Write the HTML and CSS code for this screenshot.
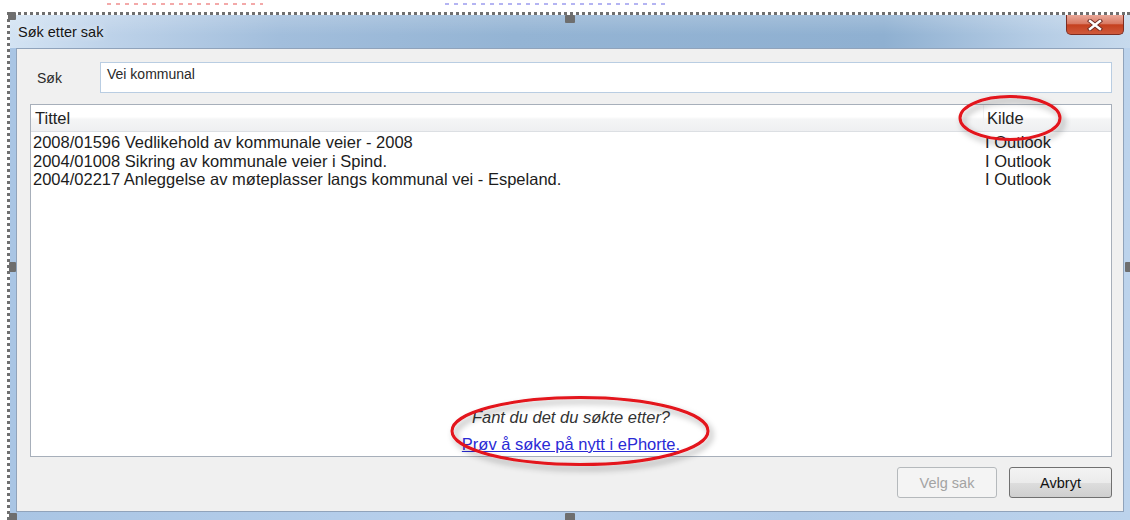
FILE: index.html
```html
<!DOCTYPE html>
<html lang="no">
<head>
<meta charset="utf-8">
<title>Søk etter sak</title>
<link rel="stylesheet" href="styles.css">
</head>
<body>
  <div class="guides">
    <span class="guide guide-red"></span>
    <span class="guide guide-blue"></span>
  </div>

  <div class="frame">
    <div class="window">
      <div class="titlebar">
        <span class="title">Søk etter sak</span>
        <button class="close" type="button" aria-label="Lukk">
          <svg width="16" height="12" viewBox="0 0 16 12">
            <path d="M3 2 L13 10 M13 2 L3 10" stroke="#6b2a22" stroke-width="4.2" stroke-linecap="square" fill="none"/>
            <path d="M3 2 L13 10 M13 2 L3 10" stroke="#ffffff" stroke-width="2.4" stroke-linecap="square" fill="none"/>
          </svg>
        </button>
      </div>

      <div class="client">
        <div class="search-row">
          <label class="search-label" for="q">Søk</label>
          <div class="search-input" id="q">Vei kommunal</div>
        </div>

        <div class="list">
          <div class="list-head">
            <span class="head-cell">Tittel</span>
            <span class="head-cell head-source">Kilde</span>
          </div>
          <div class="list-rows">
            <div class="row"><span>2008/01596 Vedlikehold av kommunale veier - 2008</span><span>I Outlook</span></div>
            <div class="row"><span>2004/01008 Sikring av kommunale veier i Spind.</span><span>I Outlook</span></div>
            <div class="row"><span>2004/02217 Anleggelse av møteplasser langs kommunal vei - Espeland.</span><span>I Outlook</span></div>
          </div>
          <div class="hint">
            <em class="hint-text">Fant du det du søkte etter?</em>
            <a class="hint-link" href="#">Prøv å søke på nytt i ePhorte.</a>
          </div>
        </div>

        <div class="actions">
          <button class="btn btn-pick" type="button" disabled>Velg sak</button>
          <button class="btn btn-cancel" type="button">Avbryt</button>
        </div>
      </div>
    </div>
  </div>

  <!-- designer resize grips -->
  <span class="handle h-tl"></span>
  <span class="handle h-tm"></span>
  <span class="handle h-ml"></span>
  <span class="handle h-mr"></span>
  <span class="handle h-bl"></span>
  <span class="handle h-bm"></span>

  <!-- hand-drawn red callouts -->
  <svg class="marks" width="1130" height="520" viewBox="0 0 1130 520">
    <defs>
      <filter id="soft" x="-20%" y="-40%" width="140%" height="180%">
        <feDropShadow dx="3" dy="4" stdDeviation="3" flood-color="#000" flood-opacity="0.35"/>
      </filter>
    </defs>
    <ellipse cx="1010" cy="118" rx="50" ry="21.5" fill="none" stroke="#e3121b" stroke-width="3" filter="url(#soft)"/>
    <ellipse cx="580" cy="431" rx="128" ry="33.5" fill="none" stroke="#e3121b" stroke-width="3" filter="url(#soft)"/>
  </svg>
</body>
</html>
```

FILE: styles.css
```css
* {
  box-sizing: border-box;
}

html,
body {
  margin: 0;
}

body {
  width: 1130px;
  height: 520px;
  overflow: hidden;
  background: #ffffff;
  font-family: "Liberation Sans", Arial, sans-serif;
  color: #1b1b1b;
}

/* dashed layout guides above the form */
.guides {
  display: flex;
  height: 12px;
  padding: 3px 0 0 107px;
}

.guide {
  display: block;
  height: 2px;
}

.guide-red {
  width: 156px;
  background: repeating-linear-gradient(90deg, #f3a9a9 0 4px, transparent 4px 9px);
}

.guide-blue {
  width: 220px;
  margin-left: 182px;
  background: repeating-linear-gradient(90deg, #b4b4f2 0 4px, transparent 4px 9px);
}

/* selection frame of the form in the designer */
.frame {
  margin-left: 7px;
  border-top: 3px dotted #6f6f6f;
  border-left: 3px dotted #6f6f6f;
}

.window {
  width: 1120px;
  height: 505px;
  display: flex;
  flex-direction: column;
  background: linear-gradient(90deg, #a9c5e4, #b8d0ec 40%, #b2cbe8 70%, #bcd3ec);
}

.titlebar {
  height: 33px;
  flex: none;
  display: flex;
  align-items: center;
  background:
    linear-gradient(rgba(255, 255, 255, 0.18), rgba(255, 255, 255, 0) 60%),
    linear-gradient(90deg, #d3e3f3 0%, #bdd2e9 9%, #a2bedc 24%, #94b4d4 45%, #8fb0d1 78%, #b3cbe4 91%, #c7daed 100%);
}

.title {
  padding-left: 8px;
  font-size: 14.5px;
  color: #151515;
  text-shadow: 0 0 6px rgba(255, 255, 255, 0.85);
}

.close {
  align-self: flex-start;
  margin-left: auto;
  margin-right: 6px;
  width: 58px;
  height: 20px;
  padding: 0;
  border: 1px solid #7c2d22;
  border-top: none;
  border-radius: 0 0 5px 5px;
  background: linear-gradient(#eaa899 0%, #d97a64 45%, #c5401f 52%, #cf5a3c 100%);
  display: flex;
  align-items: center;
  justify-content: center;
}

.client {
  height: 464px;
  margin: 0 6px;
  border: 1px solid #90a3bb;
  background: #f0f0f0;
  padding: 13px 11px 13px 13px;
  display: flex;
  flex-direction: column;
}

.search-row {
  height: 31px;
  flex: none;
  display: flex;
  align-items: center;
}

.search-label {
  width: 70px;
  padding-left: 7px;
  font-size: 14px;
  color: #2a2a2a;
}

.search-input {
  flex: 1;
  height: 31px;
  border: 1px solid #b9cde2;
  background: #ffffff;
  padding: 3px 6px;
  font-size: 14px;
  line-height: 17px;
  color: #2a2a2a;
}

.list {
  margin-top: 11px;
  height: 353px;
  flex: none;
  border: 1px solid #a7afba;
  background: #ffffff;
  display: flex;
  flex-direction: column;
  font-size: 16.5px;
}

.list-head {
  height: 27px;
  flex: none;
  display: grid;
  grid-template-columns: 952px 1fr;
  align-items: stretch;
  border-bottom: 1px solid #dcdfe3;
  background: linear-gradient(#ffffff 0%, #ffffff 45%, #f4f5f6 55%, #eeeff1 100%);
}

.head-cell {
  display: flex;
  align-items: center;
  padding-left: 4px;
  color: #222222;
}

.head-source {
  border-left: 1px solid #f1f2f4;
  padding-left: 3px;
}

.list-rows {
  flex: 1;
  padding-top: 1px;
  line-height: 18.5px;
  color: #1c1c1c;
}

.row {
  display: grid;
  grid-template-columns: 952px 1fr;
}

.row span {
  padding-left: 2px;
  white-space: nowrap;
}

.hint {
  display: flex;
  flex-direction: column;
  align-items: center;
  gap: 7px;
  line-height: 20px;
  padding-bottom: 2px;
}

.hint-text {
  color: #333333;
}

.hint-link {
  color: #2a2ad6;
  text-decoration: underline;
}

.actions {
  margin-top: 10px;
  height: 31px;
  flex: none;
  display: flex;
  justify-content: flex-end;
  gap: 12px;
}

.btn {
  height: 31px;
  padding: 0;
  font-family: "Liberation Sans", Arial, sans-serif;
  font-size: 14.5px;
  color: #111111;
  border: 1px solid #707070;
  border-radius: 3px;
  background: linear-gradient(#f3f3f3 0%, #ebebeb 50%, #dddddd 52%, #cfcfcf 100%);
}

.btn-pick {
  width: 100px;
}

.btn-cancel {
  width: 103px;
}

.btn:disabled {
  color: #a3a3a3;
  border-color: #b5b9bc;
  background: #f4f4f4;
}

/* designer grips */
.handle {
  position: absolute;
  background: #6e6e6e;
  border-radius: 1px;
}

.h-tl { left: 8px; top: 12px; width: 8px; height: 8px; }
.h-tm { left: 565px; top: 15px; width: 10px; height: 8px; }
.h-ml { left: 9px; top: 262px; width: 7px; height: 10px; }
.h-mr { left: 1125px; top: 262px; width: 6px; height: 10px; }
.h-bl { left: 9px; top: 513px; width: 8px; height: 8px; }
.h-bm { left: 565px; top: 513px; width: 10px; height: 8px; }

.marks {
  position: absolute;
  left: 0;
  top: 0;
  pointer-events: none;
}
```
